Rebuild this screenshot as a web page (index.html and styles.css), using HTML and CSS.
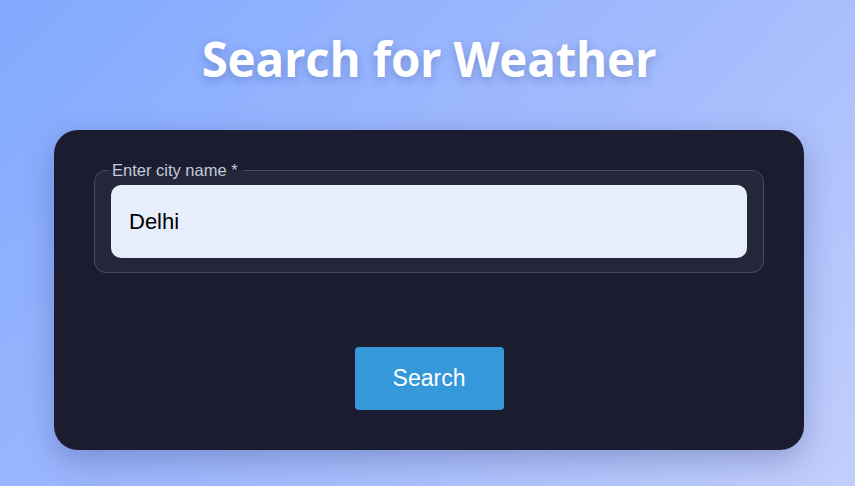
FILE: index.html
```html
<!DOCTYPE html>
<html lang="en">
<head>
<meta charset="utf-8">
<title>Search for Weather</title>
<link rel="stylesheet" href="styles.css">
</head>
<body>
<main class="page">
  <h1 class="title">Search for Weather</h1>
  <section class="card">
    <fieldset class="field">
      <legend class="field-label">Enter city name *</legend>
      <input class="field-input" type="text" value="Delhi">
    </fieldset>
    <div class="actions">
      <button class="search-btn" type="button">Search</button>
    </div>
  </section>
</main>
</body>
</html>
```

FILE: styles.css
```css
html, body {
  margin: 0;
  height: 100%;
}
body {
  background: linear-gradient(135deg, #82a9ff 0%, #a3bbfd 55%, #c2cffc 100%);
  font-family: "Liberation Sans", Arial, sans-serif;
  overflow: hidden;
}
.page {
  display: flex;
  flex-direction: column;
  align-items: center;
  padding-top: 27px;
  padding-left: 3px;
}
.title {
  margin: 0;
  font-family: "Open Sans", "Noto Sans", sans-serif;
  font-weight: 700;
  font-size: 47.5px;
  line-height: 64px;
  color: #ffffff;
  letter-spacing: -0.2px;
  text-shadow: 0 3px 8px rgba(40, 60, 120, 0.3);
}
.card {
  margin-top: 39px;
  width: 750px;
  height: 320px;
  box-sizing: border-box;
  background: #1b1c2f;
  border-radius: 24px;
  box-shadow: 0 10px 30px rgba(40, 50, 110, 0.3);
  padding: 31px 40px 40px;
  display: flex;
  flex-direction: column;
}
.field {
  margin: 0;
  padding: 6px 16px 14px;
  border: 1px solid #4a4b5e;
  border-radius: 12px;
  background: #25263a;
}
.field-label {
  padding: 0 6px 0 3px;
  margin-left: -2px;
  font-size: 16.5px;
  line-height: 18px;
  color: #c3cad8;
}
.field-input {
  display: block;
  width: 100%;
  box-sizing: border-box;
  height: 73px;
  border: none;
  outline: none;
  border-radius: 10px;
  background: #e6eefc;
  padding: 0 18px;
  font-family: "Liberation Sans", Arial, sans-serif;
  font-size: 22px;
  color: #000000;
}
.actions {
  display: flex;
  justify-content: center;
  margin-top: 74px;
}
.search-btn {
  width: 149px;
  height: 63px;
  border: none;
  border-radius: 4px;
  background: #3498db;
  color: #ffffff;
  font-family: "Liberation Sans", Arial, sans-serif;
  font-size: 23px;
  cursor: pointer;
}
```
